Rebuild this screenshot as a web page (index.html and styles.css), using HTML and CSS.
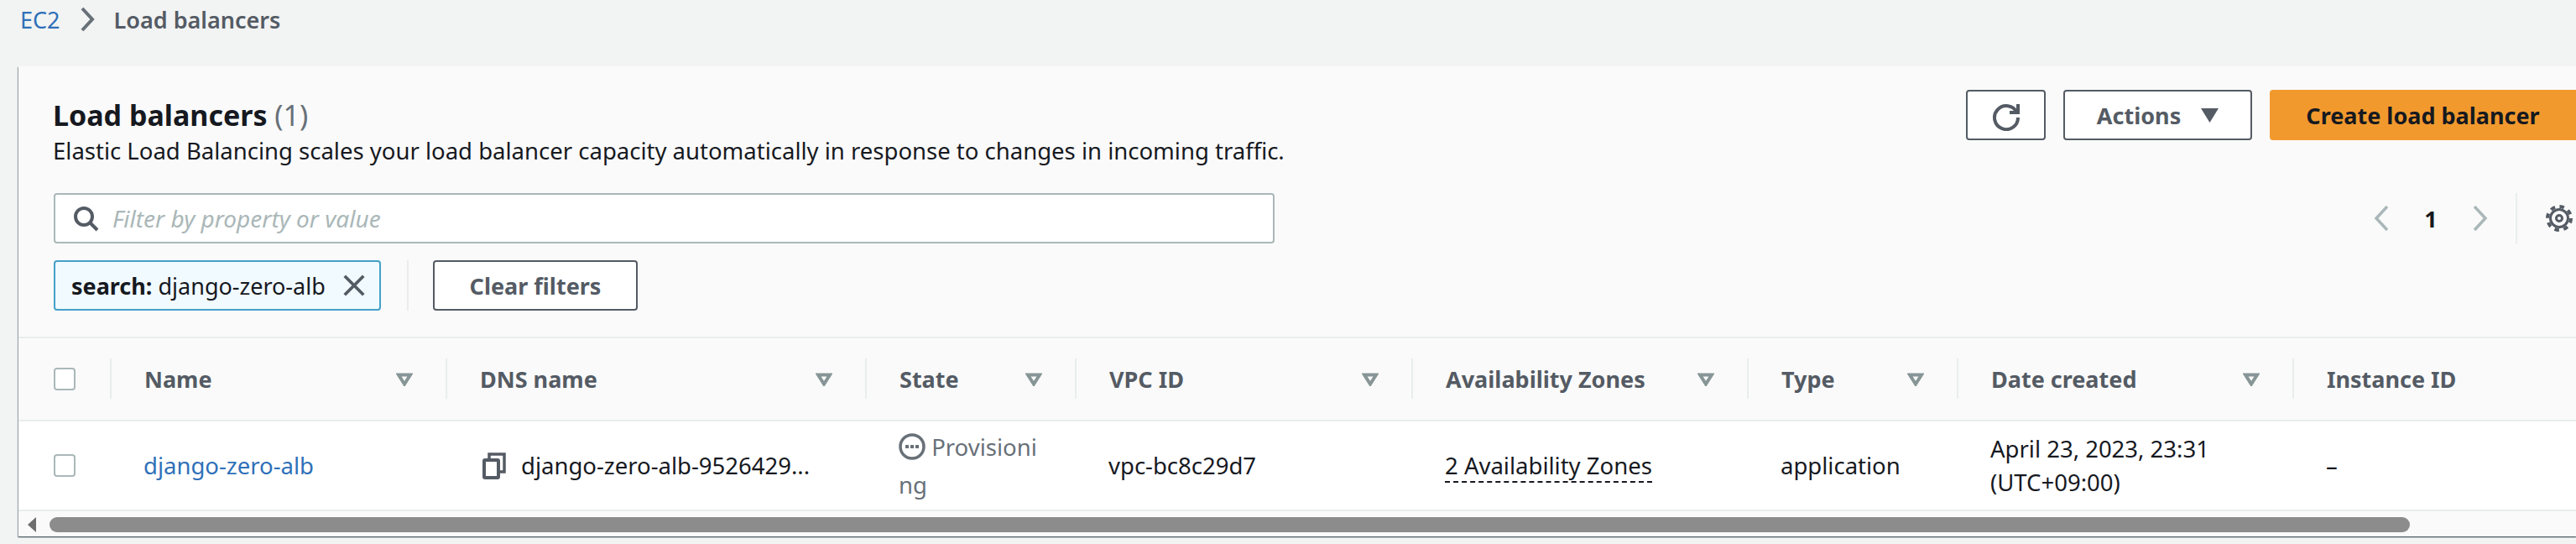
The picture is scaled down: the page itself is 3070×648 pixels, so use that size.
FILE: index.html
```html
<!DOCTYPE html>
<html lang="en">
<head>
  <meta charset="UTF-8" />
  <meta name="viewport" content="width=device-width, initial-scale=1.0"/>
  <title>Load balancers</title>
  <link rel="stylesheet" href="styles.css">
</head>
<body>

  <nav class="crumbs">
    <a href="#">EC2</a>
    <svg class="crumb-sep" viewBox="0 0 18 30"><path d="M3 2l12 13L3 28"/></svg>
    <span>Load balancers</span>
  </nav>

  <section class="panel">
    <div class="head">
      <div>
        <h1>Load balancers <span class="count">(1)</span></h1>
        <p>Elastic Load Balancing scales your load balancer capacity automatically in response to changes in incoming traffic.</p>
      </div>
      <div class="actions">
        <button class="btn btn-icon">
          <svg class="icon" viewBox="0 0 16 16"><path d="M10 5h5V0"/><path d="M15 8a7 7 0 1 1-.7-3"/></svg>
        </button>
        <button class="btn btn-actions">Actions
          <svg class="caret" viewBox="0 0 21 17"><path d="M0 0h21L10.500 17z"/></svg>
        </button>
        <button class="btn btn-primary">Create load balancer</button>
      </div>
    </div>

    <div class="filter-row">
      <div class="filter-input">
        <svg class="icon" viewBox="0 0 16 16"><circle cx="7" cy="7" r="5"/><path d="M15 15l-4.500-4.500"/></svg>
        <span>Filter by property or value</span>
      </div>
      <div class="pager">
        <svg class="pager-arrow" viewBox="0 0 18 30"><path d="M16 1L3 15l13 14"/></svg>
        <span class="page-num">1</span>
        <svg class="pager-arrow" viewBox="0 0 18 30"><path d="M2 1l13 14L2 29"/></svg>
        <span class="pager-sep"></span>
        <svg class="gear" viewBox="0 0 32 34">
          <circle class="gear-teeth" cx="16" cy="17" r="14"/>
          <circle class="gear-ring" cx="16" cy="17" r="10.500"/>
          <circle class="gear-hub" cx="16" cy="17" r="3.500"/>
        </svg>
      </div>
    </div>

    <div class="token-row">
      <div class="token">
        <span><b>search:</b> django-zero-alb</span>
        <svg class="icon-x" viewBox="0 0 16 16"><path d="M2 2l12 12M14 2L2 14"/></svg>
      </div>
      <button class="btn btn-clear">Clear filters</button>
    </div>

    <div class="table-wrap">
      <table>
        <colgroup>
          <col class="c-check"><col class="c-name"><col class="c-dns"><col class="c-state"><col class="c-vpc"><col class="c-az"><col class="c-type"><col class="c-date"><col class="c-inst">
        </colgroup>
        <thead>
          <tr>
            <th class="check-cell"><i class="checkbox"></i></th>
            <th><div class="th-in">Name<svg class="sort" viewBox="0 0 20 16"><path d="M3 2.500h14L10 13.500z"/></svg></div></th>
            <th><div class="th-in">DNS name<svg class="sort" viewBox="0 0 20 16"><path d="M3 2.500h14L10 13.500z"/></svg></div></th>
            <th><div class="th-in">State<svg class="sort" viewBox="0 0 20 16"><path d="M3 2.500h14L10 13.500z"/></svg></div></th>
            <th><div class="th-in">VPC ID<svg class="sort" viewBox="0 0 20 16"><path d="M3 2.500h14L10 13.500z"/></svg></div></th>
            <th><div class="th-in">Availability Zones<svg class="sort" viewBox="0 0 20 16"><path d="M3 2.500h14L10 13.500z"/></svg></div></th>
            <th><div class="th-in">Type<svg class="sort" viewBox="0 0 20 16"><path d="M3 2.500h14L10 13.500z"/></svg></div></th>
            <th><div class="th-in">Date created<svg class="sort" viewBox="0 0 20 16"><path d="M3 2.500h14L10 13.500z"/></svg></div></th>
            <th><div class="th-in">Instance ID</div></th>
          </tr>
        </thead>
        <tbody>
          <tr>
            <td class="check-cell"><i class="checkbox"></i></td>
            <td><a href="#">django-zero-alb</a></td>
            <td>
              <div class="dns">
                <svg class="copy" viewBox="0 0 28 32"><path d="M8 7V2h18v21h-5"/><rect class="copy-front" x="2" y="9" width="17" height="21" rx="1"/></svg>
                <span>django-zero-alb-9526429...</span>
              </div>
            </td>
            <td class="state"><svg class="pending" viewBox="0 0 32 32"><circle cx="16" cy="16" r="14"/><path class="pending-dots" d="M8 16h4M14 16h4M20 16h4"/></svg> Provisioning</td>
            <td>vpc-bc8c29d7</td>
            <td><span class="dashed">2 Availability Zones</span></td>
            <td>application</td>
            <td>April 23, 2023, 23:31<br>(UTC+09:00)</td>
            <td>–</td>
          </tr>
        </tbody>
      </table>
    </div>

    <div class="scrollbar">
      <svg class="scroll-arrow" viewBox="0 0 10 18"><path d="M10 0v18L0 9z"/></svg>
      <div class="scroll-thumb"></div>
    </div>
  </section>

</body>
</html>
```

FILE: styles.css
```css
html, body {
  margin: 0;
  padding: 0;
  height: 648px;
  overflow: hidden;
  background-color: #f2f3f3;
  color: #16191f;
  font-family: "Noto Sans", sans-serif;
  font-size: 27.5px;
}
a {
  color: #2f70b8;
  text-decoration: none;
}

.crumbs {
  display: flex;
  align-items: center;
  gap: 23px;
  height: 46px;
  padding-left: 24px;
  margin-bottom: 33px;
  font-size: 27px;
  color: #545b64;
  font-weight: 600;
}
.crumbs a {
  font-weight: 400;
}
.crumb-sep {
  width: 18px;
  height: 30px;
  fill: none;
  stroke: #687078;
  stroke-width: 4;
}

.panel {
  margin-left: 22px;
  background: #fafafa;
  height: 560px;
  box-shadow: 0 1px 1px 0 rgba(0,28,36,.5), 1px 1px 1px 0 rgba(0,28,36,.15), -1px 1px 1px 0 rgba(0,28,36,.3);
}

.head {
  display: flex;
  justify-content: space-between;
  align-items: flex-start;
  padding: 28px 0 0 41px;
  height: 151px;
  box-sizing: border-box;
}
h1 {
  margin: 8px 0 0;
  font-size: 34px;
  line-height: 44px;
  font-weight: 700;
}
.count {
  color: #687078;
  font-weight: 400;
}
.head p {
  margin: 2px 0 0;
  line-height: 38px;
}

.btn {
  height: 60px;
  box-sizing: border-box;
  border: 2px solid #545b64;
  border-radius: 4px;
  background: #fff;
  color: #545b64;
  font-family: inherit;
  font-size: 27px;
  font-weight: 700;
  padding: 0;
}
.actions {
  display: flex;
  gap: 21px;
}
.btn-icon {
  width: 95px;
}
.btn-actions {
  width: 225px;
  display: flex;
  align-items: center;
  justify-content: center;
  gap: 24px;
}
.btn-primary {
  width: 365px;
  background: #f2992e;
  border-color: #f2992e;
  color: #16191f;
  border-radius: 4px 0 0 4px;
}
.icon {
  width: 32px;
  height: 32px;
  fill: none;
  stroke: #545b64;
  stroke-width: 2;
  vertical-align: middle;
}
.caret {
  width: 21px;
  height: 17px;
  fill: #545b64;
}

.filter-row {
  display: flex;
  justify-content: space-between;
  padding: 0 4px 0 42px;
  height: 60px;
  margin-bottom: 20px;
}
.filter-input {
  width: 1455px;
  box-sizing: border-box;
  display: flex;
  align-items: center;
  gap: 16px;
  padding-left: 20px;
  background: #fff;
  border: 2px solid #aab7b8;
  border-radius: 4px;
  font-style: italic;
  font-size: 28px;
  color: #aab7b8;
}
.pager {
  display: flex;
  align-items: center;
}
.pager-arrow {
  width: 18px;
  height: 30px;
  fill: none;
  stroke: #aab7b8;
  stroke-width: 3.5;
}
.page-num {
  width: 100px;
  text-align: center;
  font-weight: 700;
  font-size: 27px;
}
.pager-sep {
  align-self: stretch;
  margin: 0 34px 0 33px;
  border-left: 2px solid #eaeded;
}
.gear {
  width: 32px;
  height: 34px;
  fill: none;
  stroke: #545b64;
}
.gear-teeth {
  stroke-width: 4;
  stroke-dasharray: 5.5 5.500;
}
.gear-ring {
  stroke-width: 3;
}
.gear-hub {
  stroke-width: 3;
}

.token-row {
  display: flex;
  padding-left: 42px;
  height: 60px;
  margin-bottom: 31px;
}
.token {
  width: 390px;
  box-sizing: border-box;
  display: flex;
  align-items: center;
  justify-content: space-between;
  padding: 0 15px 0 19px;
  background: #f1faff;
  border: 2px solid #44a0c8;
  border-radius: 4px;
  font-size: 27px;
  white-space: nowrap;
}
.icon-x {
  width: 30px;
  height: 30px;
  fill: none;
  stroke: #545b64;
  stroke-width: 2;
}
.btn-clear {
  width: 244px;
  margin-left: 62px;
  position: relative;
}
.btn-clear::before {
  content: "";
  position: absolute;
  left: -33px;
  top: -2px;
  height: 60px;
  border-left: 2px solid #eaeded;
}

.table-wrap {
  overflow: hidden;
}
table {
  width: 3048px;
  table-layout: fixed;
  border-collapse: collapse;
}
.c-check { width: 110px; }
.c-name { width: 400px; }
.c-dns { width: 500px; }
.c-state { width: 250px; }
.c-vpc { width: 401px; }
.c-az { width: 400px; }
.c-type { width: 250px; }
.c-date { width: 400px; }
.c-inst { width: 337px; }

th {
  height: 97px;
  padding: 0 40px;
  text-align: left;
  font-size: 27px;
  font-weight: 700;
  color: #545b64;
  background: #fafafa;
  border-top: 2px solid #eaeded;
  border-bottom: 2px solid #eaeded;
}
.th-in {
  display: flex;
  align-items: center;
  justify-content: space-between;
  position: relative;
  white-space: nowrap;
}
.th-in::before {
  content: "";
  position: absolute;
  left: -41px;
  top: -6px;
  height: 48px;
  border-left: 2px solid #eaeded;
}
.sort {
  width: 20px;
  height: 16px;
  fill: none;
  stroke: #879596;
  stroke-width: 4;
}
td {
  height: 105px;
  padding: 0 40px 0 39px;
  background: #fff;
  line-height: 40px;
  border-bottom: 2px solid #eaeded;
}
.check-cell {
  padding: 0 0 0 42px;
}
.checkbox {
  display: block;
  width: 26px;
  height: 27px;
  box-sizing: border-box;
  background: #fff;
  border: 2px solid #aab7b8;
  border-radius: 4px;
}
.dns {
  display: flex;
  align-items: center;
  gap: 18px;
  margin-left: 4px;
  white-space: nowrap;
}
.copy {
  width: 28px;
  height: 32px;
  flex: none;
  fill: none;
  stroke: #545b64;
  stroke-width: 3.5;
}
.copy-front {
  stroke-width: 4;
}
.state {
  color: #687078;
  line-height: 45px;
  word-break: break-all;
}
.pending {
  width: 32px;
  height: 32px;
  vertical-align: -5px;
  fill: none;
  stroke: #687078;
  stroke-width: 3.5;
}
.pending-dots {
  stroke-width: 4;
}
.dashed {
  border-bottom: 2px dashed #16191f;
}

.scrollbar {
  display: flex;
  align-items: center;
  height: 31px;
  padding-left: 11px;
  box-sizing: border-box;
}
.scroll-arrow {
  width: 10px;
  height: 18px;
  fill: #6e6e6e;
}
.scroll-thumb {
  width: 2813px;
  height: 18px;
  margin-left: 16px;
  border-radius: 9px;
  background: #8c8c8c;
}
```
